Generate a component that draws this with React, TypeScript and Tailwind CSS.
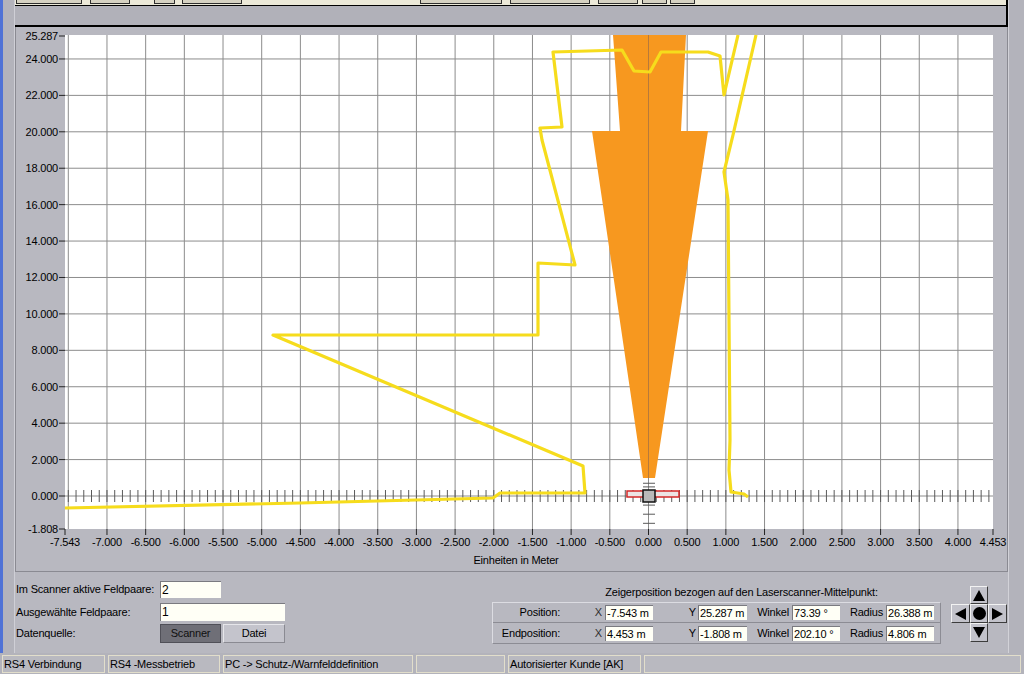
import React from "react";

// Koordinaten der Grafik: Meter -> Pixel
const X = (u: number) => 648.5 + u * 77.36;
const Y = (v: number) => 496 - v * 18.21;

const gridX = Array.from({ length: 24 }, (_, i) => (i - 15) * 0.5);
const gridY = Array.from({ length: 13 }, (_, i) => i * 2);
const axisTicks = Array.from({ length: 120 }, (_, i) => (i - 75) / 10);
const centerTicks = [0.7, 0.5, -0.5, -1.0, -1.5];

const xLabels = [
  { x: 65, t: "-7.543" },
  ...Array.from({ length: 23 }, (_, i) => {
    const u = (i - 14) * 0.5;
    return { x: X(u), t: u.toFixed(3) };
  }),
  { x: 993, t: "4.453" },
];

const yLabels = [
  { y: 36, t: "25.287" },
  ...gridY
    .slice()
    .reverse()
    .map((v) => ({ y: Y(v), t: v.toFixed(3) })),
  { y: 529, t: "-1.808" },
];

const yellowA =
  "65,508 300,503 493,498 500,493 585,493 583,466 273,335 538,335 538,263 575,265 542,140 540,128 562,127 553,52 622,50 634,71 650,72 661,52 708,52 720,56 724,95 738,35";
const yellowB =
  "756,35 733,135 724,172 728,200 730,440 729,470 731,492 744,494 748,497";
const orange = "613,35 686,35 681,131 708,131 655,478 643,478 592,131 620,131";

function Chart() {
  return (
    <svg width={991} height={544} viewBox="16 27 991 544" className="block">
      <rect x={65} y={35} width={928} height={494} fill="#ffffff" />
      {gridX.map((u) => (
        <line key={"gx" + u} x1={X(u)} x2={X(u)} y1={35} y2={529} stroke="#8c8c8c" strokeWidth={1} />
      ))}
      {gridY.map((v) => (
        <line key={"gy" + v} x1={65} x2={993} y1={Y(v)} y2={Y(v)} stroke="#8c8c8c" strokeWidth={1} />
      ))}
      <polygon points={orange} fill="#f7981f" />
      <line x1={648.5} x2={648.5} y1={35} y2={478} stroke="#b87a3a" strokeWidth={1} />
      {axisTicks.map((u) => (
        <line key={"t" + u} x1={X(u)} x2={X(u)} y1={490} y2={502} stroke="#5a5a5a" strokeWidth={1} />
      ))}
      {centerTicks.map((v) => (
        <line key={"c" + v} x1={643} x2={655} y1={Y(v)} y2={Y(v)} stroke="#5a5a5a" strokeWidth={1} />
      ))}
      <polyline points={yellowA} fill="none" stroke="#f6dc1c" strokeWidth={3.2} strokeLinejoin="round" />
      <polyline points={yellowB} fill="none" stroke="#f6dc1c" strokeWidth={3.2} strokeLinejoin="round" />
      <rect x={627} y={491} width={52} height={6} fill="#ece4e4" stroke="#d42828" strokeWidth={1.5} />
      <rect x={643} y={490} width={12} height={12} fill="#b9b9b9" stroke="#111" strokeWidth={1.5} />

      {yLabels.map((l) => (
        <g key={"yl" + l.t}>
          <line x1={59} x2={65} y1={l.y} y2={l.y} stroke="#222" strokeWidth={1} />
          <text x={58} y={l.y + 4} textAnchor="end" fill="#000">
            {l.t}
          </text>
        </g>
      ))}
      {xLabels.map((l) => (
        <g key={"xl" + l.t}>
          <line x1={l.x} x2={l.x} y1={529} y2={535} stroke="#222" strokeWidth={1} />
          <text x={l.x} y={546} textAnchor="middle" fill="#000">
            {l.t}
          </text>
        </g>
      ))}
      <text x={516} y={564} textAnchor="middle" fill="#000">
        Einheiten in Meter
      </text>
    </svg>
  );
}

function Field({ value, w }: { value: string; w: string }) {
  return (
    <div
      className={
        "h-[15px] bg-[#fffff6] border-t border-l border-[#7a7a80] border-b-[#f4f4f4] border-r-[#f4f4f4] pl-[1px] leading-[14px] whitespace-nowrap " +
        w
      }
    >
      {value}
    </div>
  );
}

function PadButton({ children }: { children?: React.ReactNode }) {
  return (
    <div className="flex items-center justify-center bg-[#c2c2ca] border-t border-l border-[#f2f2f2] border-b border-r border-b-[#3c3c3c] border-r-[#3c3c3c]">
      {children}
    </div>
  );
}

function StatusCell({ w, text }: { w: string; text?: string }) {
  return (
    <div
      className={
        "h-[18px] border border-[#e2decb] bg-[#b9b9c0] pl-[1px] leading-[16px] whitespace-nowrap overflow-hidden " +
        w
      }
    >
      {text}
    </div>
  );
}

function ToolStub({ cls }: { cls: string }) {
  return <div className={"h-[4px] border-x border-b border-[#2e2e2e] bg-[#d6d2c2] " + cls} />;
}

export default function App() {
  return (
    <div className="w-[1024px] h-[674px] bg-[#b3b3bb] flex flex-col overflow-hidden text-[11px] tracking-[-0.2px] text-black font-['Liberation_Sans',Arial,sans-serif]">
      <div className="flex h-[653px] shrink-0">
        <div className="w-[3px] bg-[#4f72d6]" />
        <div className="w-[12px] border-r border-[#cfcfd6]" />

        <div className="w-[993px] flex flex-col bg-[#b1b1b9]">
          {/* Werkzeugleiste (abgeschnitten) */}
          <div className="h-[27px] shrink-0 border-b-2 border-r-2 border-black bg-[#b1b1b9]">
            <div className="h-[6px] bg-[#ece9d8] border-b border-black flex items-start">
              <ToolStub cls="ml-[1px] w-[66px]" />
              <ToolStub cls="ml-[8px] w-[40px]" />
              <ToolStub cls="ml-[24px] w-[21px]" />
              <ToolStub cls="ml-[7px] w-[60px]" />
              <ToolStub cls="ml-[178px] w-[82px]" />
              <ToolStub cls="ml-[8px] w-[80px]" />
              <ToolStub cls="ml-[8px] w-[40px]" />
              <ToolStub cls="ml-[4px] w-[25px]" />
              <ToolStub cls="ml-[3px] w-[25px]" />
            </div>
          </div>

          {/* Grafik */}
          <div className="h-[545px] shrink-0 bg-[#b8b8c0] border-x border-b border-[#8a8a92]">
            <Chart />
          </div>

          {/* Bedienfeld unten */}
          <div className="h-[81px] flex bg-[#b8b8c0]">
            <div className="w-[477px] pl-[1px] pt-[9px] flex flex-col">
              <div className="h-[17px] flex items-center">
                <span className="w-[144px]">Im Scanner aktive Feldpaare:</span>
                <div className="w-[61px] h-[17px] bg-[#fffff6] border-t border-l border-[#7a7a80] border-b-[#ececec] border-r-[#ececec] pl-[1px] leading-[16px] text-[12px]">
                  2
                </div>
              </div>
              <div className="mt-[5px] h-[18px] flex items-center">
                <span className="w-[144px]">Ausgewählte Feldpaare:</span>
                <div className="w-[125px] h-[18px] bg-[#fffff6] border-t border-l border-[#7a7a80] border-b-[#ececec] border-r-[#ececec] pl-[1px] leading-[17px] text-[12px]">
                  1
                </div>
              </div>
              <div className="mt-[3px] h-[19px] flex items-center">
                <span className="w-[144px]">Datenquelle:</span>
                <div className="w-[61px] h-[19px] bg-[#6f6f77] border border-[#505058] flex items-center justify-center text-[#101010]">
                  Scanner
                </div>
                <div className="ml-[2px] w-[62px] h-[19px] bg-[#c4c4cc] border border-[#e6e6ea] border-b-[#8a8a92] border-r-[#8a8a92] flex items-center justify-center">
                  Datei
                </div>
              </div>
            </div>

            <div className="w-[449px] pt-[13px] flex flex-col">
              <div className="h-[14px] leading-[14px] text-center pl-[50px]">
                Zeigerposition bezogen auf den Laserscanner-Mittelpunkt:
              </div>
              <div className="mt-[3px] border border-[#8c8c94] border-t-[#dcdce2] border-l-[#dcdce2]">
                <div className="h-[20px] flex items-center border-b border-[#8c8c94]">
                  <span className="w-[67px] text-right">Position:</span>
                  <span className="w-[45px] text-right pr-[3px] text-[#303030]">X</span>
                  <Field value="-7.543 m" w="w-[48px]" />
                  <span className="w-[45px] text-right pr-[2px]">Y</span>
                  <Field value="25.287 m" w="w-[49px]" />
                  <span className="w-[45px] text-right pr-[3px]">Winkel</span>
                  <Field value="73.39 °" w="w-[48px]" />
                  <span className="w-[46px] text-right pr-[3px]">Radius</span>
                  <Field value="26.388 m" w="w-[48px]" />
                </div>
                <div className="h-[20px] flex items-center">
                  <span className="w-[67px] text-right">Endposition:</span>
                  <span className="w-[45px] text-right pr-[3px] text-[#303030]">X</span>
                  <Field value="4.453 m" w="w-[48px]" />
                  <span className="w-[45px] text-right pr-[2px]">Y</span>
                  <Field value="-1.808 m" w="w-[49px]" />
                  <span className="w-[45px] text-right pr-[3px]">Winkel</span>
                  <Field value="202.10 °" w="w-[48px]" />
                  <span className="w-[46px] text-right pr-[3px]">Radius</span>
                  <Field value="4.806 m" w="w-[48px]" />
                </div>
              </div>
            </div>

            <div className="ml-[10px] pt-[14px]">
              <div className="grid grid-cols-[19px_18px_19px] grid-rows-[18px_19px_19px]">
                <div />
                <PadButton>
                  <svg width="12" height="11" viewBox="0 0 12 11">
                    <polygon points="6,0 12,11 0,11" fill="#000" />
                  </svg>
                </PadButton>
                <div />
                <PadButton>
                  <svg width="11" height="12" viewBox="0 0 11 12">
                    <polygon points="0,6 11,0 11,12" fill="#000" />
                  </svg>
                </PadButton>
                <PadButton>
                  <div className="w-[13px] h-[13px] rounded-full bg-black" />
                </PadButton>
                <PadButton>
                  <svg width="11" height="12" viewBox="0 0 11 12">
                    <polygon points="11,6 0,0 0,12" fill="#000" />
                  </svg>
                </PadButton>
                <div />
                <PadButton>
                  <svg width="12" height="11" viewBox="0 0 12 11">
                    <polygon points="6,11 12,0 0,0" fill="#000" />
                  </svg>
                </PadButton>
                <div />
              </div>
            </div>
          </div>
        </div>

        <div className="flex-1 border-l border-[#d2d2d8]" />
      </div>

      {/* Statuszeile */}
      <div className="h-[21px] flex gap-[3px] pl-[2px] pt-[2px] bg-[#b3b3bb] text-[11px]">
        <StatusCell w="w-[103px]" text="RS4 Verbindung" />
        <StatusCell w="w-[112px]" text="RS4 -Messbetrieb" />
        <StatusCell w="w-[190px]" text="PC -> Schutz-/Warnfelddefinition" />
        <StatusCell w="w-[89px]" />
        <StatusCell w="w-[133px]" text="Autorisierter Kunde [AK]" />
        <StatusCell w="w-[377px]" />
      </div>
    </div>
  );
}
